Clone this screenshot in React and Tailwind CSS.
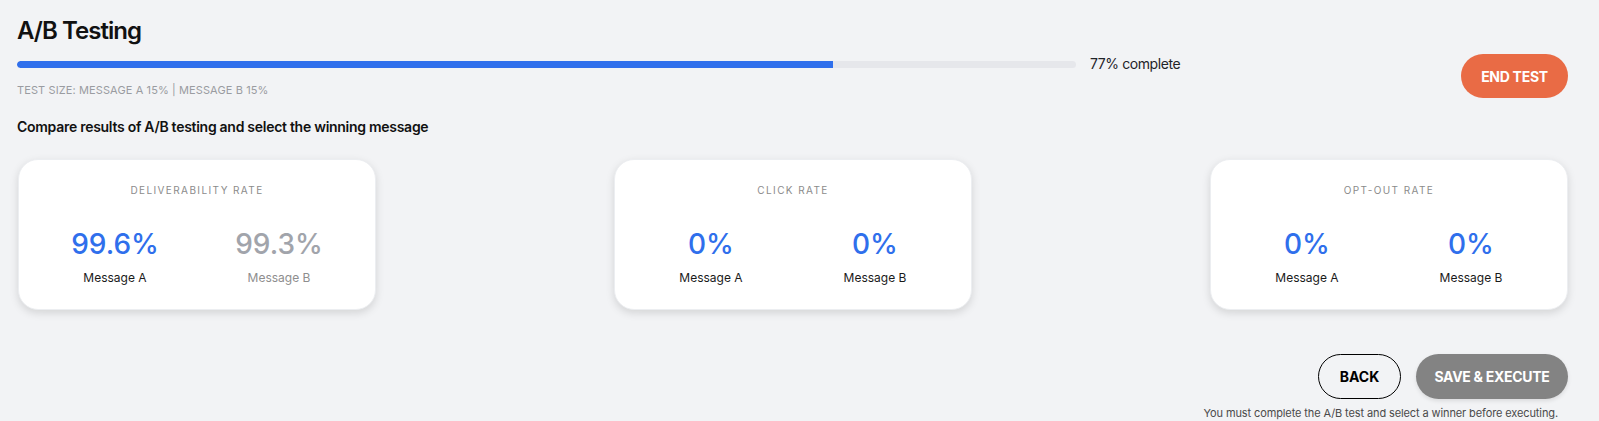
import React from "react";

const metrics = [
    { title: "Deliverability Rate", a: "99.6%", b: "99.3%", bMuted: true },
    { title: "Click Rate", a: "0%", b: "0%" },
    { title: "Opt-out Rate", a: "0%", b: "0%" },
];

function MetricCard({ title, a, b, bMuted }) {
    return (
        <div className="w-[358px] h-[151px] bg-white rounded-[20px] shadow-[0_3px_8px_rgba(0,0,0,0.13)] border border-[#eceef1] pt-[22px] px-[14px]">
            <div className="text-center text-[10px] leading-4 tracking-[0.14em] uppercase text-[#8b8b8b]">{title}</div>
            <div className="grid grid-cols-2 mt-[32px]">
                <div className="flex flex-col items-center">
                    <span className="text-[28px] leading-[28px] font-medium text-[#2f6fec]">{a}</span>
                    <span className="mt-[12px] text-[12px] leading-4 text-[#1a1a1a]">Message A</span>
                </div>
                <div className="flex flex-col items-center">
                    <span className={`text-[28px] leading-[28px] font-medium ${bMuted ? "text-[#a1a4ab]" : "text-[#2f6fec]"}`}>{b}</span>
                    <span className={`mt-[12px] text-[12px] leading-4 ${bMuted ? "text-[#8e8e8e]" : "text-[#1a1a1a]"}`}>Message B</span>
                </div>
            </div>
        </div>
    );
}

export default function App() {
    return (
        <div className="min-h-[421px] bg-[#f2f3f5] pl-[17px] pr-[31px] pt-[15px] font-['Inter',sans-serif] text-[#111]">
            <h1 className="text-[24px] leading-8 font-semibold tracking-[-0.04em]">A/B Testing</h1>

            <div className="mt-[7px] flex items-start">
                <div className="w-3/4">
                    <div className="flex items-center h-5 gap-[14px]">
                        <div className="flex-1 h-[7px] rounded-full bg-[#e6e7eb] overflow-hidden">
                            <div className="h-full bg-[#2f6fec] rounded-l-full w-[77%]"></div>
                        </div>
                        <span className="text-[14px] leading-5 tracking-[-0.03em] text-[#1f2329]">77% complete</span>
                    </div>
                    <div className="mt-[8px] text-[11px] leading-4 uppercase tracking-[0.01em] text-[#9a9ca1]">
                        Test size: Message A 15% | Message B 15%
                    </div>
                </div>
                <div className="flex-1 flex justify-end">
                    <button className="h-[44px] w-[107px] rounded-full bg-[#e96b45] text-white text-[14px] font-bold tracking-[-0.02em]">
                        END TEST
                    </button>
                </div>
            </div>

            <p className="mt-[19px] text-[14px] leading-5 font-semibold tracking-[-0.02em]">
                Compare results of A/B testing and select the winning message
            </p>

            <div className="mt-[22px] flex justify-between pl-px">
                {metrics.map((m) => (
                    <MetricCard key={m.title} {...m} />
                ))}
            </div>

            <div className="mt-[44px] flex justify-end gap-[15px]">
                <button className="h-[45px] w-[83px] rounded-full border border-black text-[14px] font-bold text-black">
                    BACK
                </button>
                <button className="h-[45px] w-[152px] rounded-full bg-[#838383] text-white text-[14px] font-bold tracking-[-0.02em] shadow-[0_2px_4px_rgba(0,0,0,0.1)]">
                    SAVE &amp; EXECUTE
                </button>
            </div>
            <div className="mt-[6px] pr-[10px] text-right text-[11px] leading-4 tracking-[-0.01em] text-[#4a4a4a]">
                You must complete the A/B test and select a winner before executing.
            </div>
        </div>
    );
}
